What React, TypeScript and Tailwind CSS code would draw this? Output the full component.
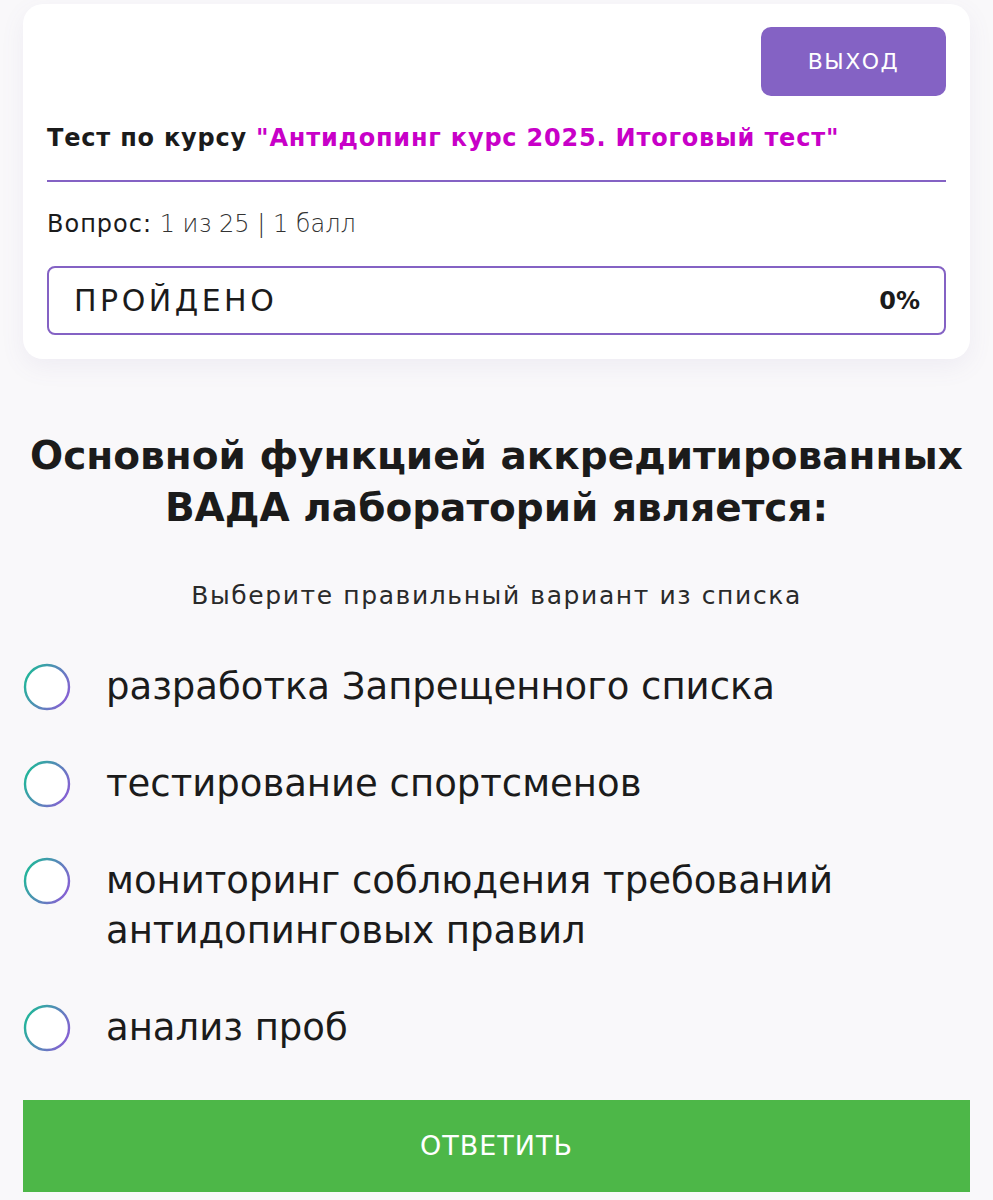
import React from "react";

const options = [
  "разработка Запрещенного списка",
  "тестирование спортсменов",
  "мониторинг соблюдения требований антидопинговых правил",
  "анализ проб",
];

function Radio({ id }: { id: number }) {
  return (
    <svg width="48" height="48" viewBox="0 0 48 48" className="shrink-0">
      <defs>
        <linearGradient id={`rg${id}`} x1="0" y1="0.3" x2="1" y2="0.8">
          <stop offset="0%" stopColor="#22b59a" />
          <stop offset="100%" stopColor="#8b5cd6" />
        </linearGradient>
      </defs>
      <circle cx="24" cy="24" r="22" fill="#fff" stroke={`url(#rg${id})`} strokeWidth="2.4" />
    </svg>
  );
}

export default function App() {
  return (
    <div
      className="min-h-screen bg-[#f9f8fa] px-[23px] pt-[4px] text-[#1b1b1b]"
      style={{ fontFamily: '"DejaVu Sans", sans-serif' }}
    >
      {/* header card */}
      <div className="bg-white rounded-[20px] shadow-[0_8px_24px_rgba(120,100,160,0.08)] px-6 pt-[23px] pb-[24px]">
        <div className="flex justify-end">
          <button className="w-[185px] h-[69px] rounded-[10px] bg-[#8462c4] text-white text-[22px] tracking-[1.5px] uppercase">
            выход
          </button>
        </div>
        <div className="mt-[26px] text-[24px] leading-[32px] tracking-[0.8px] font-bold">
          Тест по курсу{" "}
          <span className="text-[#c800c8]">"Антидопинг курс 2025. Итоговый тест"</span>
        </div>
        <div className="mt-[26px] border-b-2 border-[#8462c4]" />
        <div className="mt-[26px] text-[24px] leading-[32px]">
          <span className="tracking-[1px]">Вопрос:</span>{" "}
          <span className="font-light text-[#333]">1 из 25 | 1 балл</span>
        </div>
        <div className="mt-[26px] h-[69px] rounded-[8px] border-2 border-[#8462c4] flex items-center justify-between pl-[25px] pr-[24px]">
          <span className="text-[30px] tracking-[3.5px] uppercase">Пройдено</span>
          <span className="text-[24px] font-bold">0%</span>
        </div>
      </div>

      {/* question */}
      <h1 className="mt-[71px] text-center text-[39px] leading-[52px] font-bold">
        Основной функцией аккредитированных
        <br />
        ВАДА лабораторий является:
      </h1>
      <p className="mt-[46px] text-center text-[25px] leading-[32px] tracking-[1.6px] text-[#2a2a2a]">
        Выберите правильный вариант из списка
      </p>

      <div className="mt-[50px] flex flex-col gap-[47px]">
        {options.map((o, i) => (
          <label key={i} className="flex items-start gap-[35px] cursor-pointer">
            <span className="h-[50px] flex items-center">
              <Radio id={i} />
            </span>
            <span className="text-[37px] leading-[50px] max-w-[780px]">{o}</span>
          </label>
        ))}
      </div>

      <button className="mt-[47px] w-full h-[92px] bg-[#4db748] text-white text-[27px] tracking-[1px] uppercase">
        Ответить
      </button>
    </div>
  );
}
